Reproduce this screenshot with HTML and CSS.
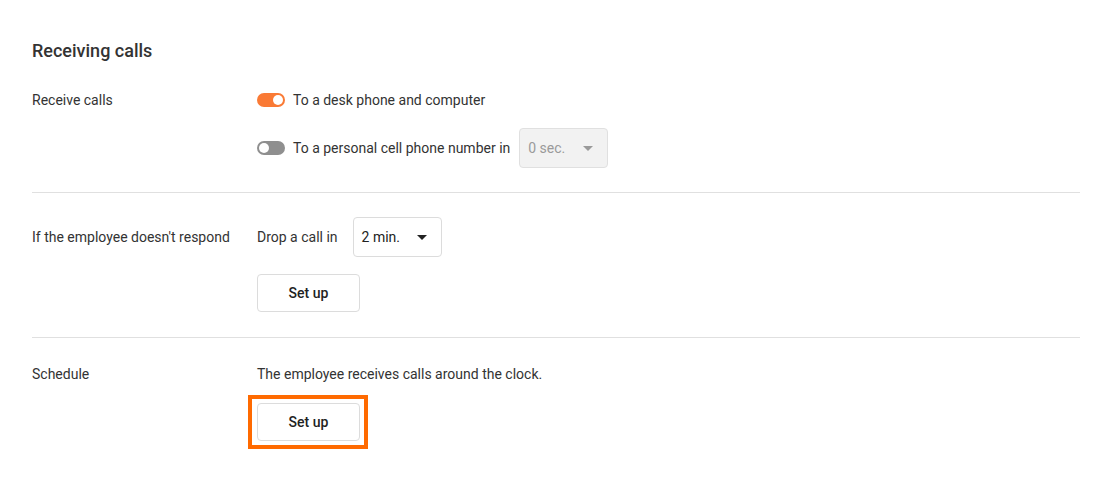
FILE: index.html
```html
<!DOCTYPE html>
<html lang="en">
<head>
<meta charset="utf-8">
<title>Receiving calls</title>
<link rel="stylesheet" href="styles.css">
</head>
<body>
<main class="page">
  <h2 class="title">Receiving calls</h2>

  <section class="row row-first">
    <div class="label">Receive calls</div>
    <div class="content">
      <div class="line">
        <span class="toggle on"><span class="knob"></span></span>
        <span>To a desk phone and computer</span>
      </div>
      <div class="line line-select">
        <span class="toggle off"><span class="knob"></span></span>
        <span>To a personal cell phone number in</span>
        <span class="select disabled"><span>0 sec.</span><span class="caret"></span></span>
      </div>
    </div>
  </section>

  <section class="row row-second">
    <div class="label label-tall">If the employee doesn't respond</div>
    <div class="content">
      <div class="line line-drop">
        <span>Drop a call in</span>
        <span class="select"><span>2 min.</span><span class="caret"></span></span>
      </div>
      <button class="btn">Set up</button>
    </div>
  </section>

  <section class="row row-third">
    <div class="label">Schedule</div>
    <div class="content">
      <div class="line">The employee receives calls around the clock.</div>
      <div class="highlight"><button class="btn btn-inner">Set up</button></div>
    </div>
  </section>
</main>
</body>
</html>
```

FILE: styles.css
```css
* { box-sizing: border-box; }
html, body { margin: 0; background: #fff; }
body {
  font-family: Roboto, "Noto Sans", "Liberation Sans", sans-serif;
  font-size: 14px;
  color: #333;
}
.page {
  padding: 39px 32px 0 32px;
}
.title {
  margin: 0 0 27px 0;
  font-size: 18px;
  font-weight: 500;
  line-height: 24px;
  color: #333;
}
.row {
  display: grid;
  grid-template-columns: 225px 1fr;
  border-bottom: 1px solid #e0e0e0;
}
.row-first { padding: 0 0 24px 0; }
.row-second { padding: 24px 0 25px 0; }
.row-third { padding: 26px 0 0 0; border-bottom: none; }
.label {
  line-height: 20px;
}
.label-tall { line-height: 40px; }
.content {
  display: flex;
  flex-direction: column;
  align-items: flex-start;
}
.line {
  display: flex;
  align-items: center;
  gap: 8px;
  line-height: 20px;
  min-height: 20px;
}
.line-select { margin-top: 18px; }
.line-select .select { margin-left: 1px; }
.line-drop { gap: 15px; }
.toggle {
  position: relative;
  display: inline-block;
  width: 28px;
  height: 14px;
  border-radius: 7px;
  flex: none;
}
.toggle.on { background: #fa7a35; }
.toggle.off { background: #8f8f8f; }
.knob {
  position: absolute;
  top: 2px;
  width: 10px;
  height: 10px;
  border-radius: 50%;
  background: #fff;
}
.toggle.on .knob { right: 2px; }
.toggle.off .knob { left: 2px; }
.select {
  display: inline-flex;
  align-items: center;
  justify-content: space-between;
  width: 89px;
  height: 40px;
  padding: 0 14px 0 8px;
  border: 1px solid #dcdcdc;
  border-radius: 4px;
  background: #fff;
  color: #222;
}
.select.disabled {
  background: #f2f2f2;
  border-color: #e0e0e0;
  color: #9a9a9a;
}
.caret {
  width: 0;
  height: 0;
  border-left: 5px solid transparent;
  border-right: 5px solid transparent;
  border-top: 5px solid #222;
}
.select.disabled .caret { border-top-color: #9a9a9a; }
.btn {
  width: 103px;
  height: 38px;
  margin-top: 17px;
  background: #fff;
  border: 1px solid #dcdcdc;
  border-radius: 4px;
  font-family: inherit;
  font-size: 14px;
  font-weight: 500;
  color: #222;
  cursor: pointer;
}
.highlight {
  margin: 11px 0 0 -9px;
  padding: 4px 4px 4px 5px;
  border: 4px solid #ff6a00;
}
.btn-inner { display: block; margin-top: 0; }
```
